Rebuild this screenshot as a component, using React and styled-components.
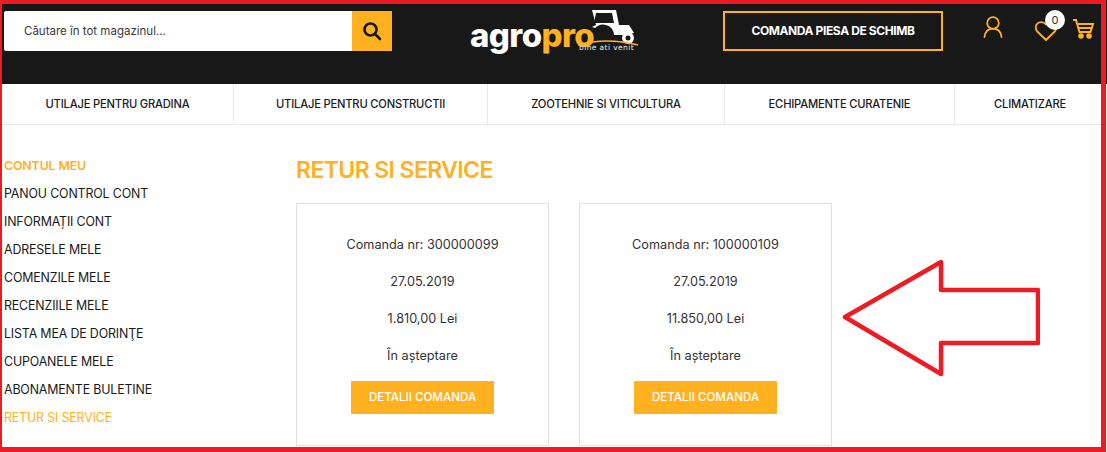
import React from 'react';
import styled, { createGlobalStyle } from 'styled-components';

const GlobalStyle = createGlobalStyle`
  html, body { margin: 0; padding: 0; background: #fff; }
  body { font-family: "Inter", "Liberation Sans", sans-serif; color: #1a1a1a; }
  * { box-sizing: border-box; }
`;

const Page = styled.div`
  position: relative;
  width: 1107px;
  height: 452px;
  overflow: hidden;
  background: #fff;
`;

const Frame = styled.div`
  position: absolute;
  left: 0;
  top: 0;
  width: 1106px;
  height: 452px;
  border-style: solid;
  border-color: #ed1c24;
  border-width: 4px 5px 5px 2px;
  pointer-events: none;
`;

const Header = styled.header`
  height: 84px;
  background: #181818;
  display: flex;
  align-items: flex-start;
  padding: 11px 0 0 4px;
  overflow: hidden;
`;

const Search = styled.div`
  display: flex;
  width: 388px;
  height: 40px;
  flex: none;
`;

const SearchInput = styled.div`
  flex: 1;
  background: #fff;
  border-radius: 2px 0 0 2px;
  padding-left: 20px;
  font-size: 11.5px;
  line-height: 40px;
  color: #3a3a3a;
`;

const SearchButton = styled.div`
  width: 40px;
  background: #ffb11f;
  display: flex;
  align-items: center;
  justify-content: center;
`;

const Logo = styled.div`
  position: relative;
  width: 180px;
  height: 50px;
  margin: -4px 0 0 78px;
  flex: none;
`;

const LogoWord = styled.span`
  position: absolute;
  left: 0;
  top: 10px;
  font-size: 33px;
  line-height: 36px;
  font-weight: 800;
  letter-spacing: -0.6px;
  color: #fff;
`;

const LogoAccent = styled.span`
  color: #ffb11f;
`;

const LogoSlogan = styled.span`
  position: absolute;
  left: 109px;
  top: 36px;
  font-family: "DejaVu Sans", sans-serif;
  font-size: 7.5px;
  color: #eee;
  letter-spacing: 0.4px;
`;

const OrderButton = styled.div`
  width: 220px;
  height: 40px;
  margin-left: 73px;
  flex: none;
  border: 2px solid #ffb11f;
  color: #fff;
  font-size: 12px;
  font-weight: 700;
  letter-spacing: -0.4px;
  line-height: 36px;
  text-align: center;
`;

const IconSlot = styled.div`
  position: relative;
  flex: none;
  width: 30px;
  height: 30px;
  margin-left: ${(p) => p.$gap}px;
  color: #ffb11f;
`;

const Badge = styled.span`
  position: absolute;
  left: 13px;
  top: -1px;
  width: 20px;
  height: 20px;
  border-radius: 50%;
  background: #fff;
  color: #333;
  font-size: 11px;
  line-height: 20px;
  text-align: center;
`;

const Nav = styled.nav`
  display: flex;
  height: 41px;
  padding-left: 2px;
  border-bottom: 1px solid #e8e8e8;
`;

const NavItem = styled.div`
  flex: none;
  width: ${(p) => p.$w}px;
  border-right: ${(p) => (p.$last ? 'none' : '1px solid #e8e8e8')};
  font-size: 11.2px;
  font-weight: 500;
  letter-spacing: -0.2px;
  line-height: 40px;
  text-align: center;
  color: #1a1a1a;
`;

const Content = styled.div`
  display: flex;
  align-items: flex-start;
`;

const Sidebar = styled.aside`
  width: 296px;
  flex: none;
  padding: 27px 0 0 4px;
`;

const SideLink = styled.div`
  height: 28px;
  line-height: 28px;
  font-size: 12.4px;
  font-weight: ${(p) => (p.$title ? 600 : 400)};
  letter-spacing: -0.15px;
  color: ${(p) => (p.$active ? '#ffb11f' : '#1a1a1a')};
`;

const Main = styled.main`
  flex: 1;
  padding-top: 30px;
`;

const Title = styled.h1`
  margin: 0 0 18px;
  font-size: 23px;
  line-height: 30px;
  font-weight: 600;
  letter-spacing: -0.6px;
  color: #ffb11f;
`;

const Cards = styled.div`
  display: flex;
  gap: 30px;
`;

const Card = styled.div`
  width: 253px;
  height: 243px;
  border: 1px solid #e0e0e0;
  padding-top: 22px;
  display: flex;
  flex-direction: column;
  align-items: center;
`;

const CardLine = styled.div`
  height: 37px;
  line-height: 37px;
  font-size: 12.7px;
  color: #333;
`;

const DetailsButton = styled.div`
  margin-top: 7px;
  width: 143px;
  height: 33px;
  background: #ffb11f;
  color: #fff;
  font-size: 11.6px;
  font-weight: 500;
  line-height: 33px;
  text-align: center;
`;

const Arrow = styled.svg`
  position: absolute;
  left: 840px;
  top: 258px;
`;

const SearchIcon = () => (
  <svg width="20" height="20" viewBox="0 0 20 20" fill="none" stroke="#181818" strokeWidth="2.6" strokeLinecap="round">
    <circle cx="8.5" cy="8.5" r="6" />
    <path d="M13 13l5 5" />
  </svg>
);

const UserIcon = () => (
  <svg width="30" height="30" viewBox="0 0 30 30" fill="none" stroke="currentColor" strokeWidth="1.8" strokeLinecap="round">
    <circle cx="15" cy="12" r="5.8" />
    <path d="M6.5 26c.6-5.5 4-8.4 8.5-8.4s7.900 2.900 8.500 8.400" />
  </svg>
);

const HeartIcon = () => (
  <svg width="30" height="30" viewBox="0 0 30 30" fill="none" stroke="currentColor" strokeWidth="1.8" strokeLinejoin="round">
    <path d="M14 29L5.300 20.500a5.500 5.500 0 0 1 7.800-7.800l.9.9.9-.9a5.500 5.500 0 0 1 7.800 7.800z" />
  </svg>
);

const CartIcon = () => (
  <svg width="30" height="30" viewBox="0 0 30 30" fill="none" stroke="currentColor" strokeWidth="2">
    <path d="M1 9h3l3.500 12h11l2.500-8H5.500M7 17h13" />
    <circle cx="9" cy="25" r="1.800" fill="currentColor" />
    <circle cx="17" cy="25" r="1.800" fill="currentColor" />
  </svg>
);

const Tractor = styled.svg`
  position: absolute;
  left: 108px;
  top: 2px;
`;

const SIDE = [
  'PANOU CONTROL CONT', 'INFORMAȚII CONT', 'ADRESELE MELE', 'COMENZILE MELE',
  'RECENZIILE MELE', 'LISTA MEA DE DORINŢE', 'CUPOANELE MELE', 'ABONAMENTE BULETINE',
];

const NAV = [
  ['UTILAJE PENTRU GRADINA', 232],
  ['UTILAJE PENTRU CONSTRUCTII', 254],
  ['ZOOTEHNIE SI VITICULTURA', 237],
  ['ECHIPAMENTE CURATENIE', 230],
  ['CLIMATIZARE', 150],
];

const ORDERS = [
  { nr: '300000099', date: '27.05.2019', total: '1.810,00 Lei' },
  { nr: '100000109', date: '27.05.2019', total: '11.850,00 Lei' },
];

export default function App() {
  return (
    <Page>
      <GlobalStyle />
      <Header>
        <Search>
          <SearchInput>Căutare în tot magazinul...</SearchInput>
          <SearchButton><SearchIcon /></SearchButton>
        </Search>
        <Logo>
          <LogoWord>agro<LogoAccent>pro</LogoAccent></LogoWord>
          <Tractor width="68" height="38" viewBox="0 0 68 38">
            <path d="M14 1h24l3 15h10l5 8-9 2H36a11 11 0 0 0-19-7l-3-1 4-2z" fill="#fff" />
            <path d="M18 4l-2 10h20l-2-10z" fill="#181818" />
            <circle cx="50" cy="29" r="6" fill="#fff" />
            <circle cx="50" cy="29" r="2.500" fill="#181818" />
            <path d="M0 36q28-8 60 0" stroke="#ffb11f" strokeWidth="1.500" fill="none" />
          </Tractor>
          <LogoSlogan>bine ati venit</LogoSlogan>
        </Logo>
        <OrderButton>COMANDA PIESA DE SCHIMB</OrderButton>
        <IconSlot $gap={35}><UserIcon /></IconSlot>
        <IconSlot $gap={24}><HeartIcon /><Badge>0</Badge></IconSlot>
        <IconSlot $gap={10}><CartIcon /></IconSlot>
      </Header>
      <Nav>
        {NAV.map(([label, w], i) => (
          <NavItem key={label} $w={w} $last={i === NAV.length - 1}>{label}</NavItem>
        ))}
      </Nav>
      <Content>
        <Sidebar>
          <SideLink $title $active>CONTUL MEU</SideLink>
          {SIDE.map((s) => <SideLink key={s}>{s}</SideLink>)}
          <SideLink $active>RETUR SI SERVICE</SideLink>
        </Sidebar>
        <Main>
          <Title>RETUR SI SERVICE</Title>
          <Cards>
            {ORDERS.map((o) => (
              <Card key={o.nr}>
                <CardLine>Comanda nr: {o.nr}</CardLine>
                <CardLine>{o.date}</CardLine>
                <CardLine>{o.total}</CardLine>
                <CardLine>În așteptare</CardLine>
                <DetailsButton>DETALII COMANDA</DetailsButton>
              </Card>
            ))}
          </Cards>
        </Main>
      </Content>
      <Arrow width="200" height="120" viewBox="0 0 200 120">
        <path d="M5 59L101 4v28h97v53h-97v31z" fill="none" stroke="#ed1c24" strokeWidth="4.500" strokeLinejoin="round" />
      </Arrow>
      <Frame />
    </Page>
  );
}
